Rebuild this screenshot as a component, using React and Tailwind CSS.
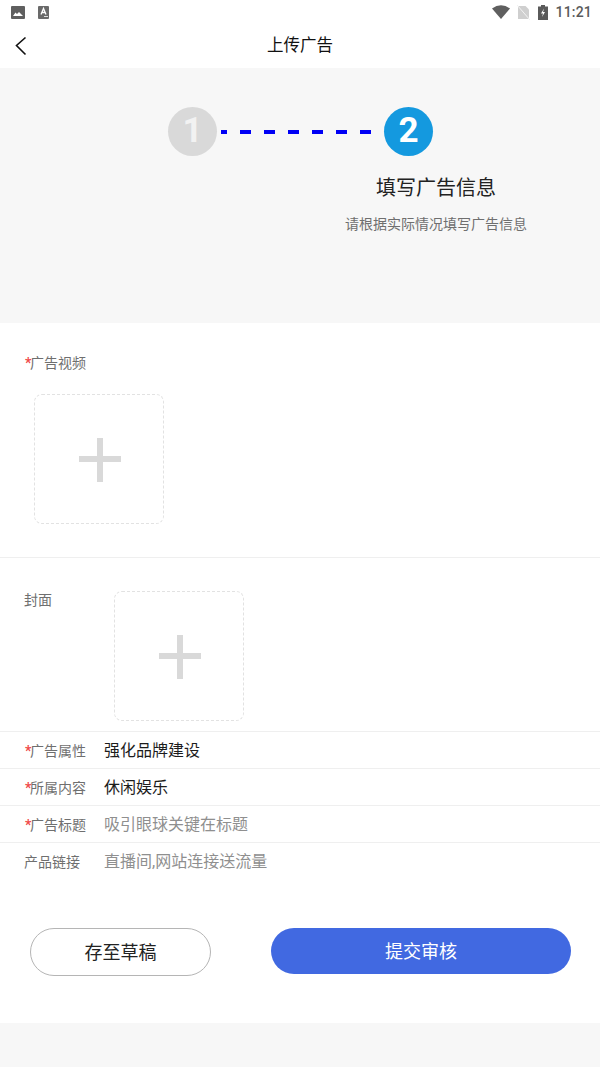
import React from 'react';

const FONT = "font-['Roboto','Noto_Sans_CJK_SC',sans-serif]";

function PlusBox({ className = '' }) {
    return (
        <div className={`w-[130px] h-[130px] border border-dashed border-[#e2e2e2] rounded-lg flex items-center justify-center pt-[2px] pl-[1px] ${className}`}>
            <svg width="42" height="44" viewBox="0 0 42 44">
                <rect x="0" y="18" width="42" height="6" fill="#d9d9d9" />
                <rect x="18" y="0" width="6" height="44" fill="#d9d9d9" />
            </svg>
        </div>
    );
}

function FieldRow({ label, required, value, placeholder }) {
    return (
        <div className="h-[37px] flex items-center pl-6 pt-[2px] border-t border-[#efefef]">
            <div className="w-20 text-[14px] text-[#6f6f6f] flex items-center">
                {required && <span className="text-[#f04a4a] text-[14px] font-bold w-[6px] pl-[1px]">*</span>}
                <span>{label}</span>
            </div>
            {value
                ? <span className="text-[16px] text-[#1c1c1c]">{value}</span>
                : <span className="text-[16px] text-[#8f8f8f]">{placeholder}</span>}
        </div>
    );
}

export default function App() {
    return (
        <div className={`w-[600px] h-[1067px] bg-white overflow-hidden flex flex-col ${FONT}`}>
            {/* status bar */}
            <div className="h-6 flex items-center justify-between pl-[11px] pr-[8px]">
                <div className="flex items-center gap-[13px]">
                    <svg width="14" height="13" viewBox="0 0 14 13">
                        <rect width="14" height="13" rx="1" fill="#5f5f5f" />
                        <path d="M2 10 L4.5 6.5 L6 8 L8 6 L12 10 Z" fill="#fff" />
                    </svg>
                    <svg width="11" height="13" viewBox="0 0 11 13">
                        <rect width="11" height="13" rx="1" fill="#6a6a6a" />
                        <path d="M3 8.5 L5.5 2.5 L8 8.5 M4 6.5 H7" stroke="#fff" strokeWidth="1.3" fill="none" />
                        <rect x="6" y="10" width="4" height="1" fill="#ddd" />
                    </svg>
                </div>
                <div className="flex items-center">
                    <svg width="18" height="14" viewBox="0 0 18 14" className="mr-[7px]">
                        <path d="M0 3.5 Q9 -3 18 3.5 L9 14 Z" fill="#5f5f5f" />
                    </svg>
                    <svg width="13" height="15" viewBox="0 0 13 15" className="mr-[8px]">
                        <path d="M1 1 H8.5 L12 4.5 V14 H1 Z" fill="#cfcfcf" />
                        <path d="M0 0 L13 15" stroke="#f2f2f2" strokeWidth="1" />
                    </svg>
                    <svg width="10" height="15" viewBox="0 0 10 15" className="mr-[7px]">
                        <path d="M3 0 H7 V1.5 H10 V15 H0 V1.5 H3 Z" fill="#5a5a5a" />
                        <path d="M6 3.5 L3 8.5 H5 L4 12 L7 7 H5 Z" fill="#fff" />
                    </svg>
                    <span className="text-[14px] text-[#5a5a5a] font-medium tracking-[0.2px]">11:21</span>
                </div>
            </div>

            {/* header */}
            <div className="h-11 relative flex items-center justify-center shrink-0 pt-[1px]">
                <svg width="12" height="20" viewBox="0 0 12 20" className="absolute left-[15px] top-[12px]">
                    <path d="M10.5 1.5 L1.5 9.5 L10.5 18.5" stroke="#111" strokeWidth="1.6" fill="none" />
                </svg>
                <span className="text-[16.5px] text-[#111]">上传广告</span>
            </div>

            {/* steps */}
            <div className="h-[255px] shrink-0 bg-[#f7f7f7] pt-[39px]">
                <div className="flex items-center pl-[168px]">
                    <div className="w-[49px] h-[49px] rounded-full bg-[#d9d9d9] flex items-center justify-center text-[#f2f2f2] text-[35px] font-bold">1</div>
                    <div className="flex items-center ml-1 h-[4px]">
                        {[6, 11, 11, 11, 11, 11, 11].map((w, i) => (
                            <div key={i} className={`h-[4px] bg-[#0000f5] ${i === 0 ? 'w-[6px]' : 'w-[11px] ml-[13px]'}`} />
                        ))}
                    </div>
                    <div className="w-[49px] h-[49px] ml-[13px] rounded-full bg-[#1499df] flex items-center justify-center text-white text-[35px] font-bold">2</div>
                </div>
                <div className="ml-[336px] w-[200px] text-center mt-[18px] text-[20px] leading-[28px] text-[#222]">填写广告信息</div>
                <div className="ml-[336px] w-[200px] text-center mt-[12px] text-[14px] leading-[20px] text-[#6f6f6f]">请根据实际情况填写广告信息</div>
            </div>

            {/* ad video */}
            <div className="h-[234px] shrink-0 pt-[30px] pl-6">
                <div className="text-[14px] leading-5 text-[#6f6f6f] flex items-center">
                    <span className="text-[#f04a4a] font-bold w-[6px] pl-[1px]">*</span>
                    <span>广告视频</span>
                </div>
                <PlusBox className="ml-[10px] mt-[21px]" />
            </div>

            {/* cover */}
            <div className="h-[174px] shrink-0 border-t border-[#efefef] pt-[33px] pl-6 flex items-start">
                <div className="w-[90px] text-[14px] leading-5 text-[#6f6f6f] mt-[-1px]">封面</div>
                <PlusBox />
            </div>

            {/* fields */}
            <FieldRow label="广告属性" required value="强化品牌建设" />
            <FieldRow label="所属内容" required value="休闲娱乐" />
            <FieldRow label="广告标题" required placeholder="吸引眼球关键在标题" />
            <FieldRow label="产品链接" placeholder="直播间,网站连接送流量" />

            {/* buttons */}
            <div className="flex items-start pl-[30px] pt-[49px] h-[144px] shrink-0">
                <button className="w-[181px] h-[48px] rounded-full border border-[#b5b5b5] bg-white text-[18px] text-[#222]">存至草稿</button>
                <button className="w-[300px] h-[46px] ml-[60px] rounded-full bg-[#4169e1] text-[18px] text-white">提交审核</button>
            </div>

            <div className="flex-1 bg-[#f7f7f7]" />
        </div>
    );
}
